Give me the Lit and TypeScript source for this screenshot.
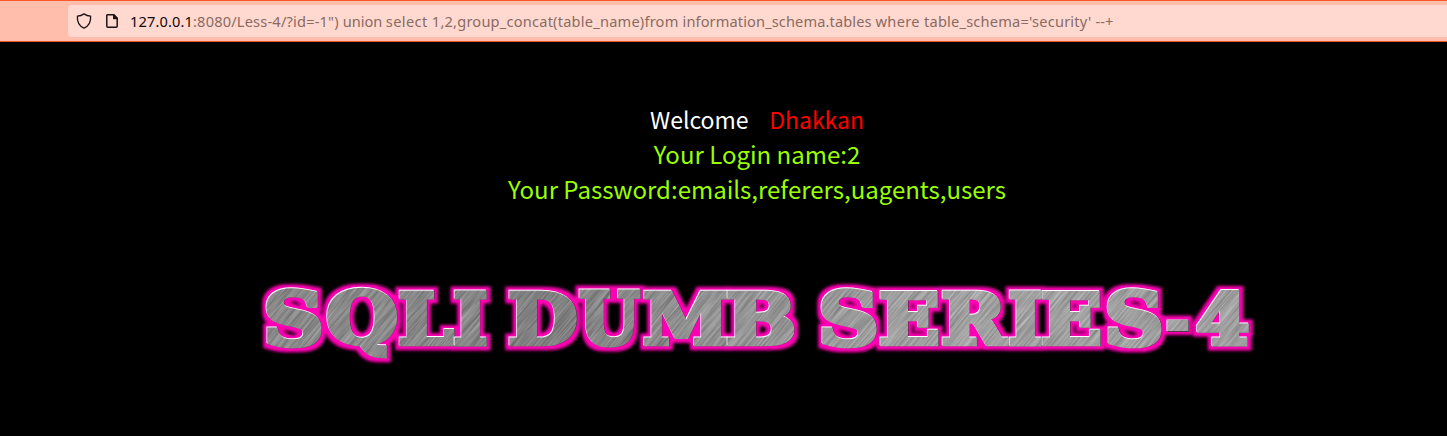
import { LitElement, html, svg, css } from "lit";
import { customElement } from "lit/decorators.js";

const ctx = document.createElement("canvas").getContext("2d")!;

type UrlPart = { text: string; width: number; host?: boolean };

// Each run is tracked to its own width; the width includes the trailing gap.
const URL_PARTS: UrlPart[] = [
  { text: "127.0.0.1", width: 63, host: true },
  { text: ":8080/Less-4/?id=-1\") ", width: 149.8 },
  { text: "union ", width: 43 },
  { text: "select ", width: 46 },
  { text: "1,2,group_concat(table_name)from ", width: 250.7 },
  { text: "information_schema.tables ", width: 193 },
  { text: "where ", width: 48.5 },
  { text: "table_schema='security' ", width: 171.5 },
  { text: "--+", width: 18 },
];

const URL_FONT = '14.6px "Noto Sans"';

function tracking(part: UrlPart): number {
  ctx.font = URL_FONT;
  return (part.width - ctx.measureText(part.text).width) / part.text.length;
}

// Ink box of every title glyph: character, left, right, top, bottom.
type Glyph = [string, number, number, number, number];
const TITLE: Glyph[] = [
  ["S", 266, 322, 289, 348],
  ["Q", 327, 397, 288, 358],
  ["L", 399, 455, 290, 346],
  ["I", 454, 487, 290, 346],
  ["D", 509, 577, 290, 346],
  ["U", 579, 641, 290, 347],
  ["M", 644, 728, 290, 346],
  ["B", 727, 794, 290, 346],
  ["S", 821, 877, 289, 348],
  ["E", 880, 939, 290, 346],
  ["R", 942, 1009, 290, 346],
  ["I", 1009, 1042, 290, 346],
  ["E", 1042, 1101, 290, 346],
  ["S", 1107, 1162, 289, 348],
  ["-", 1167, 1189, 319, 331],
  ["4", 1197, 1249, 290, 346],
];

const STROKE = 5;
const TITLE_TOP = 270;

function glyph([ch, l, r, t, b]: Glyph, dx: number, dy: number, color: string) {
  ctx.font = 'bold 100px "DejaVu Serif"';
  const m = ctx.measureText(ch);
  const heavy = ch === "-" ? 0 : STROKE;
  const sx = (r - l - heavy) / (m.actualBoundingBoxRight + m.actualBoundingBoxLeft);
  const sy = (b - t - heavy) / (m.actualBoundingBoxAscent + m.actualBoundingBoxDescent);
  const x = l + heavy / 2 + m.actualBoundingBoxLeft * sx + dx;
  const y = t + heavy / 2 + m.actualBoundingBoxAscent * sy + dy - TITLE_TOP;
  return svg`<text class="glyph" transform="translate(${x} ${y}) scale(${sx} ${sy})"
    fill=${color} stroke=${color} stroke-width=${(heavy * 2) / (sx + sy)}>${ch}</text>`;
}

@customElement("address-bar")
class AddressBar extends LitElement {
  static styles = css`
    :host {
      display: block;
      box-sizing: border-box;
      height: 42px;
      border-top: 1px solid #f75a2b;
      border-bottom: 1px solid #ee5426;
      background: #ffbeab;
      padding: 4px 0 4px 68px;
    }
    .field {
      display: flex;
      align-items: center;
      box-sizing: border-box;
      height: 32px;
      padding-left: 8px;
      background: #ffd9d0;
      border-radius: 4px 0 0 4px;
    }
    .icon {
      flex: none;
      width: 16px;
      height: 16px;
      margin-right: 12px;
    }
    .page {
      margin-right: 10px;
    }
    .url {
      display: flex;
      font: 14.6px/20px "Noto Sans", sans-serif;
      white-space: pre;
      color: #896b62;
    }
    .host {
      color: #15090a;
    }
  `;
  render() {
    return html`<div class="field">
      <svg class="icon" viewBox="0 0 16 16" fill="none" stroke="#1c1412" stroke-width="1.35" stroke-linejoin="round">
        <path d="M8 .9C6.2 2.2 3.8 3 1.4 3.1 1 8.7 3 13 8 15.1 13 13 15 8.7 14.6 3.1 12.2 3 9.8 2.2 8 .9Z" />
      </svg>
      <svg class="icon page" viewBox="0 0 16 16">
        <path d="M3.4 1.8H9.8L13.2 5.2V13.1Q13.2 14.2 12.1 14.2H3.9Q2.8 14.2 2.8 13.1V2.5Q2.8 1.8 3.4 1.8Z" fill="none" stroke="#1c1412" stroke-width="1.5" />
        <path d="M9 1.2H10.2L13.9 4.9V6.3H9.7Q9 6.3 9 5.6Z" fill="#1c1412" />
      </svg>
      <div class="url">${URL_PARTS.map(
        (p) => html`<span class=${p.host ? "host" : "path"} style="letter-spacing:${tracking(p)}px">${p.text}</span>`
      )}</div>
    </div>`;
  }
}

@customElement("metal-title")
class MetalTitle extends LitElement {
  static styles = css`
    :host {
      display: block;
      height: 110px;
    }
    .art {
      display: block;
      overflow: visible;
    }
    .glyph {
      font: bold 100px "DejaVu Serif", serif;
      stroke-linejoin: miter;
      stroke-miterlimit: 2;
    }
  `;
  render() {
    return html`<svg class="art" width="1447" height="110" viewBox="0 0 1447 110">
      <defs>
        <filter id="glow" filterUnits="userSpaceOnUse" x="240" y="0" width="1040" height="110" color-interpolation-filters="sRGB">
          <feMorphology operator="dilate" radius="3.9" />
          <feGaussianBlur stdDeviation="1.7" />
        </filter>
        <filter id="brushed" filterUnits="userSpaceOnUse" x="-400" y="-800" width="2300" height="1800" color-interpolation-filters="sRGB">
          <feTurbulence type="fractalNoise" baseFrequency="0.02 0.6" numOctaves="3" seed="5" />
          <feColorMatrix values="1.5 0 0 0 -.2  1.5 0 0 0 -.2  1.5 0 0 0 -.2  0 0 0 0 1" />
        </filter>
        <linearGradient id="metal" gradientUnits="userSpaceOnUse" x1="260" y1="0" x2="1250" y2="0">
          <stop offset="0" stop-color="#888" />
          <stop offset=".1" stop-color="#8c8c8c" />
          <stop offset=".3" stop-color="#7e7e7e" />
          <stop offset=".46" stop-color="#959595" />
          <stop offset=".7" stop-color="#a8a8a8" />
          <stop offset="1" stop-color="#a4a4a4" />
        </linearGradient>
        <mask id="letters" maskUnits="userSpaceOnUse" x="240" y="-40" width="1040" height="190">
          ${TITLE.map((g) => [glyph(g, -0.8, -0.5, "#000"), glyph(g, 0, 0, "#fff")])}
        </mask>
      </defs>
      <g filter="url(#glow)">${TITLE.map((g) => glyph(g, 0, 0, "#ff00b4"))}</g>
      ${TITLE.map((g) => glyph(g, 0.6, 0.5, "#59334f"))}
      ${TITLE.map((g) => glyph(g, -0.7, -0.5, "#fff"))}
      <g mask="url(#letters)">
        <rect x="240" width="1040" height="110" fill="url(#metal)" />
        <g opacity=".23"><g transform="rotate(-50 750 55)">
          <rect x="-400" y="-800" width="2300" height="1800" filter="url(#brushed)" />
        </g></g>
      </g>
    </svg>`;
  }
}

@customElement("app-root")
class AppRoot extends LitElement {
  static styles = css`
    :host {
      display: block;
      height: 436px;
      overflow: hidden;
      background: #000;
    }
    .message {
      height: 105px;
      padding: 59px 0 64px 67px;
      text-align: center;
      font: 24px/35px "Noto Sans CJK SC", sans-serif;
      color: #99ff00;
    }
    .welcome {
      box-sizing: border-box;
      height: 35px;
      padding-top: 1px;
      color: #fff;
      white-space: pre;
      font-size: 23px;
    }
    .name {
      color: #f00;
    }
  `;
  render() {
    return html`<address-bar></address-bar>
      <div class="message">
        <div class="welcome">Welcome    <span class="name">Dhakkan</span></div>
        <div>Your Login name:2</div>
        <div>Your Password:emails,referers,uagents,users</div>
      </div>
      <metal-title></metal-title>`;
  }
}
